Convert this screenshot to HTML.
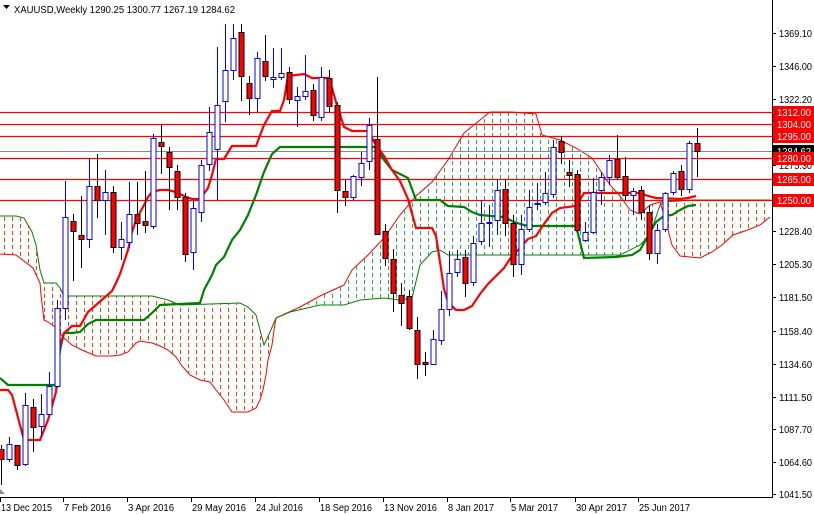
<!DOCTYPE html>
<html><head><meta charset="utf-8">
<style>
html,body{margin:0;padding:0;background:#fff;width:814px;height:514px;overflow:hidden}
svg{display:block}
text{font-family:"Liberation Sans",sans-serif;font-size:10px;fill:#000}
</style></head>
<body>
<svg id="c" width="814" height="514" xmlns="http://www.w3.org/2000/svg">
<defs>
<pattern id="hr" patternUnits="userSpaceOnUse" width="8" height="7" x="0" y="0">
<line x1="4.5" y1="0" x2="4.5" y2="4" stroke="#ff4000" stroke-width="1"/></pattern>
<pattern id="hg" patternUnits="userSpaceOnUse" width="8" height="7" x="0" y="0">
<line x1="4.5" y1="0" x2="4.5" y2="4" stroke="#2eaa50" stroke-width="1"/></pattern>
</defs>
<g id="clouds"></g>
<g id="hlines"></g>
<g id="lines"></g>
<g id="candles"></g>
<g id="axis"></g>
</svg>
<script>
var NS="http://www.w3.org/2000/svg";
function el(p,t,a,txt){var e=document.createElementNS(NS,t);for(var k in a)e.setAttribute(k,a[k]);if(txt!=null)e.textContent=txt;document.getElementById(p).appendChild(e);return e;}
function pts(a){return a.map(function(p){return p[0]+","+p[1]}).join(" ");}
var r1top=[[0,216],[16,216],[24,218],[28,225],[32,232],[36,245],[40,270],[44,283],[56,283],[60,288],[64,296],[152,296],[168,300],[180,305],[240,303],[248,307],[256,315],[260,330],[264,345],[270,332],[276,318]];
var r1bot=[[0,254],[16,255],[33,268],[40,283],[41,295],[44,320],[48,322],[55,327],[64,338],[72,345],[82,350],[96,356],[112,356],[120,355],[128,352],[136,343],[140,341],[152,343],[160,346],[168,350],[176,357],[182,366],[190,375],[200,380],[210,382],[216,390],[224,400],[232,412],[248,412],[256,408],[260,400],[263,390],[266,375],[268,360],[272,345],[274,330],[276,318]];
var gtop=[[276,318],[300,307],[320,296],[344,285],[352,270],[368,255],[384,238],[400,215],[416,196],[432,182],[448,160],[464,133],[480,120],[490,112],[512,112],[536,114],[542,135],[560,140],[576,148],[592,158],[600,170],[610,185],[620,196],[630,210],[640,214],[650,205],[660,202]];
var gbot=[[276,318],[290,312],[320,305],[344,305],[360,300],[384,298],[400,300],[412,298],[420,265],[432,252],[440,250],[448,255],[600,255],[620,255],[640,245],[650,235],[660,205],[664,202]];
var r2top=[[660,202],[680,201],[690,200],[770,200]];
var r2bot=[[660,202],[664,215],[672,245],[680,256],[700,258],[712,252],[722,245],[733,235],[745,231],[760,225],[770,217]];
function cloud(top,bot,fill,tc,bc){
 var poly=top.concat(bot.slice().reverse());
 el("clouds","polygon",{points:pts(poly),fill:"url(#"+fill+")",stroke:"none"});
 el("clouds","polyline",{points:pts(top),fill:"none",stroke:tc,"stroke-width":1});
 el("clouds","polyline",{points:pts(bot),fill:"none",stroke:bc,"stroke-width":1});
}
cloud(r1top,r1bot,"hr","#008000","#ff0000");
cloud(gtop,gbot,"hg","#ff0000","#008000");
cloud(r2top,r2bot,"hr","#008000","#ff0000");
el("hlines","line",{x1:0,y1:151.5,x2:772,y2:151.5,stroke:"#8a8a8a","stroke-width":1});
[112,124,136,158,179,200].forEach(function(y){el("hlines","line",{x1:0,y1:y+0.5,x2:772,y2:y+0.5,stroke:"#ff0000","stroke-width":1.3});});
var ten=[[0,390],[8,390],[12,395],[24,440],[40,440],[48,420],[56,392],[60,345],[64,333],[72,326],[80,326],[88,312],[96,305],[104,298],[112,291],[116,283],[120,274],[124,262],[128,250],[132,232],[136,220],[144,205],[148,197],[152,192],[160,190],[168,190],[176,192],[184,196],[192,199],[200,199],[208,188],[212,175],[216,159],[224,159],[232,146],[256,146],[264,125],[272,111],[280,111],[284,100],[288,76],[304,74],[312,78],[328,78],[332,88],[336,102],[344,127],[352,131],[368,131],[376,145],[384,156],[392,170],[400,181],[408,199],[416,228],[432,228],[436,236],[440,262],[444,289],[448,302],[456,310],[464,310],[472,306],[480,294],[488,284],[496,276],[504,268],[512,256],[520,248],[528,239],[536,236],[544,224],[552,213],[560,208],[576,206],[584,193],[640,193],[648,196],[656,198],[680,199],[688,198],[696,196]];
var kij=[[0,378],[8,385],[56,385],[60,350],[64,333],[72,333],[80,332],[88,324],[96,320],[144,320],[152,313],[160,305],[200,303],[204,290],[212,275],[216,265],[224,257],[232,240],[240,230],[248,215],[256,195],[264,172],[272,154],[280,147],[376,147],[384,160],[392,170],[408,178],[416,200],[440,200],[448,206],[464,207],[472,212],[480,215],[504,217],[512,221],[520,224],[528,226],[576,226],[584,258],[616,257],[632,255],[640,250],[648,236],[656,222],[664,216],[672,215],[680,210],[688,206],[696,205]];
el("lines","polyline",{points:pts(kij),fill:"none",stroke:"#008000","stroke-width":2.2});
el("lines","polyline",{points:pts(ten),fill:"none",stroke:"#ff0000","stroke-width":2.2});
var C=[[0,449,459,445,485,"r"],[8,444,459,437,462,"b"],[16,445,465,445,470,"r"],[24,405,464,393,466,"b"],[32,407,427,399,452,"r"],[40,414,426,394,437,"b"],[48,386,414,372,414,"b"],[56,308,386,300,388,"b"],[64,217,308,181,320,"b"],[72,221,231,214,281,"r"],[80,235,239,196,268,"r"],[88,186,239,158,248,"b"],[96,186,200,154,218,"r"],[104,192,200,170,235,"b"],[112,192,247,186,253,"r"],[120,239,247,222,260,"b"],[128,214,242,182,248,"b"],[136,214,223,182,235,"r"],[144,221,225,171,233,"r"],[152,138,226,134,229,"b"],[160,142,146,125,174,"r"],[168,152,167,147,210,"r"],[176,171,197,165,210,"r"],[184,197,254,193,262,"r"],[192,208,252,200,270,"b"],[200,165,212,160,222,"b"],[208,132,164,107,171,"b"],[216,105,149,47,200,"b"],[224,70,101,24,122,"b"],[232,38,70,24,80,"b"],[240,32,76,24,101,"r"],[248,83,98,76,115,"r"],[256,58,98,52,112,"b"],[264,61,76,35,81,"r"],[272,77,79,48,88,"b"],[280,73,77,48,80,"b"],[288,72,99,67,104,"r"],[296,96,100,87,127,"b"],[304,91,96,55,100,"b"],[312,90,115,84,121,"r"],[320,77,117,67,121,"b"],[328,78,106,70,112,"r"],[336,105,190,102,213,"r"],[344,191,197,180,206,"r"],[352,176,197,175,200,"b"],[360,163,177,152,186,"b"],[368,125,161,118,170,"b"],[376,139,234,77,235,"r"],[384,231,258,224,266,"r"],[392,259,293,249,312,"r"],[400,295,303,283,326,"r"],[408,296,328,290,330,"r"],[416,330,364,317,379,"r"],[424,362,364,352,376,"r"],[432,339,364,330,365,"b"],[440,309,340,291,345,"b"],[448,273,309,251,316,"b"],[456,259,272,250,277,"b"],[464,257,283,250,297,"r"],[472,243,282,236,286,"b"],[480,223,241,200,245,"b"],[488,222,223,205,247,"b"],[496,190,220,180,235,"b"],[504,189,223,180,236,"r"],[512,223,264,215,277,"r"],[520,229,264,215,275,"b"],[528,207,229,190,232,"b"],[536,203,204,183,210,"b"],[544,193,202,172,205,"b"],[552,147,194,140,198,"b"],[560,141,152,136,164,"r"],[568,172,175,160,187,"r"],[576,174,230,170,232,"r"],[584,232,240,222,242,"b"],[592,192,232,178,234,"b"],[600,177,190,172,205,"b"],[608,160,177,155,185,"b"],[616,159,177,135,180,"r"],[624,176,195,157,200,"r"],[632,191,195,188,215,"b"],[640,190,212,186,220,"r"],[648,212,253,205,260,"r"],[656,230,253,224,264,"b"],[664,193,229,192,232,"b"],[672,173,192,171,195,"b"],[680,171,189,165,196,"r"],[688,143,189,141,193,"b"],[696,143,151,128,177,"r"]];
C.forEach(function(c){
 var x=c[0]+1.5, bull=c[5]=="b", col=bull?"#0000ff":"#000";
 el("candles","line",{x1:x,y1:c[3],x2:x,y2:c[4],stroke:col,"stroke-width":1});
 var h=Math.max(1,c[2]-c[1]);
 el("candles","rect",{x:x-2.5,y:c[1]+0.5,width:5,height:h,fill:bull?"#fff":"#ff0000",stroke:col,"stroke-width":1});
});
el("axis","line",{x1:772.5,y1:0,x2:772.5,y2:497,stroke:"#000","stroke-width":1});
el("axis","line",{x1:0,y1:497.5,x2:773,y2:497.5,stroke:"#000","stroke-width":1});
[[33,"1369.10"],[66,"1346.00"],[99,"1322.20"],[165,"1275.30"],[231,"1228.40"],[264,"1205.30"],[297,"1181.50"],[331,"1158.40"],[364,"1134.60"],[397,"1111.50"],[429,"1087.70"],[462,"1064.60"],[494,"1041.50"]].forEach(function(p){
 el("axis","line",{x1:772,y1:p[0]+0.5,x2:776,y2:p[0]+0.5,stroke:"#000"});
 el("axis","text",{x:779,y:p[0]+4,textLength:33,lengthAdjust:"spacingAndGlyphs"},p[1]);
});
function lab(y,t,bg,fg){el("axis","rect",{x:773,y:y-6,width:41,height:13,fill:bg});el("axis","text",{x:777,y:y+4,style:"fill:"+fg,textLength:34,lengthAdjust:"spacingAndGlyphs"},t);}
lab(151,"1284.62","#000","#fff");
lab(112,"1312.00","#ff0000","#fff");lab(124,"1304.00","#ff0000","#fff");lab(136,"1295.00","#ff0000","#fff");
lab(158,"1280.00","#ff0000","#fff");lab(179,"1265.00","#ff0000","#fff");lab(200,"1250.00","#ff0000","#fff");
[[0,"13 Dec 2015",51],[63,"7 Feb 2016",47],[127,"3 Apr 2016",46],[191,"29 May 2016",54],[255,"24 Jul 2016",47],[319,"18 Sep 2016",52],[383,"13 Nov 2016",53],[447,"8 Jan 2017",46],[510,"5 Mar 2017",47],[575,"30 Apr 2017",51],[638,"25 Jun 2017",51]].forEach(function(d){
 el("axis","line",{x1:d[0]+0.5,y1:497,x2:d[0]+0.5,y2:502,stroke:"#000"});
 el("axis","text",{x:d[0]+1,y:511,textLength:d[2],lengthAdjust:"spacingAndGlyphs"},d[1]);
});
el("axis","polygon",{points:"3,5 10,5 6.5,9",fill:"#000"});
el("axis","text",{x:14,y:13,textLength:221,lengthAdjust:"spacingAndGlyphs"},"XAUUSD,Weekly  1290.25 1300.77 1267.19 1284.62");
el("axis","polygon",{points:"0,489 5,494 0,494",fill:"#8a8a8a"});
</script>
</body></html>
